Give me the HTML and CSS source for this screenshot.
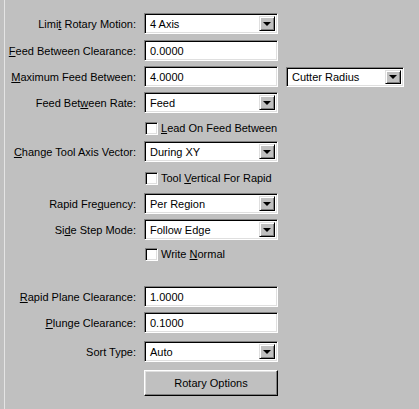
FILE: index.html
```html
<!DOCTYPE html>
<html>
<head>
<meta charset="utf-8">
<link rel="stylesheet" href="styles.css">
</head>
<body>
<div class="panel">
  <div class="row r1">
    <label class="lbl">Limi<u>t</u> Rotary Motion:</label>
    <div class="combo"><span class="val">4 Axis</span><span class="btn"><i class="tri"></i></span></div>
  </div>
  <div class="row r2">
    <label class="lbl"><u>F</u>eed Between Clearance:</label>
    <div class="edit"><span class="val">0.0000</span></div>
  </div>
  <div class="row r3">
    <label class="lbl"><u>M</u>aximum Feed Between:</label>
    <div class="edit"><span class="val">4.0000</span></div>
    <div class="combo small"><span class="val">Cutter Radius</span><span class="btn"><i class="tri"></i></span></div>
  </div>
  <div class="row r4">
    <label class="lbl">Feed Bet<u>w</u>een Rate:</label>
    <div class="combo"><span class="val">Feed</span><span class="btn"><i class="tri"></i></span></div>
  </div>
  <div class="check c1"><span class="box"></span><span class="ctext"><u>L</u>ead On Feed Between</span></div>
  <div class="row r6">
    <label class="lbl"><u>C</u>hange Tool Axis Vector:</label>
    <div class="combo"><span class="val">During XY</span><span class="btn"><i class="tri"></i></span></div>
  </div>
  <div class="check c2"><span class="box"></span><span class="ctext">Tool <u>V</u>ertical For Rapid</span></div>
  <div class="row r8">
    <label class="lbl">Rapid Fre<u>q</u>uency:</label>
    <div class="combo"><span class="val">Per Region</span><span class="btn"><i class="tri"></i></span></div>
  </div>
  <div class="row r9">
    <label class="lbl">Si<u>d</u>e Step Mode:</label>
    <div class="combo"><span class="val">Follow Edge</span><span class="btn"><i class="tri"></i></span></div>
  </div>
  <div class="check c3"><span class="box"></span><span class="ctext">Write <u>N</u>ormal</span></div>
  <div class="row r11">
    <label class="lbl"><u>R</u>apid Plane Clearance:</label>
    <div class="edit"><span class="val">1.0000</span></div>
  </div>
  <div class="row r12">
    <label class="lbl"><u>P</u>lunge Clearance:</label>
    <div class="edit"><span class="val">0.1000</span></div>
  </div>
  <div class="row r13">
    <label class="lbl">Sort Type:</label>
    <div class="combo"><span class="val">Auto</span><span class="btn"><i class="tri"></i></span></div>
  </div>
  <div class="brow">
    <div class="pbtn">Rotary Options</div>
  </div>
</div>
</body>
</html>
```
FILE: styles.css
```css
html, body {
  margin: 0;
  padding: 0;
  background: #c0c0c0;
  width: 419px;
  height: 409px;
  overflow: hidden;
}
body {
  font-family: "Liberation Sans", Arial, sans-serif;
  font-size: 11px;
  color: #000;
}
.panel {
  margin-left: 4px;
  border-left: 1px solid #e4e4e4;
  height: 409px;
  box-sizing: border-box;
  padding-top: 13px;
}
.row {
  display: flex;
  align-items: center;
  height: 21px;
}
.lbl {
  width: 131px;
  text-align: right;
  margin-right: 8px;
  white-space: nowrap;
}
u { text-decoration: underline; text-underline-offset: 1px; }
.edit, .combo {
  width: 134px;
  height: 21px;
  box-sizing: border-box;
  background: #fff;
  border: 1px solid;
  border-color: #808080 #fff #fff #808080;
  box-shadow: inset 1px 1px 0 #000, inset -1px -1px 0 #dfdfdf;
  display: flex;
  align-items: center;
  padding: 2px;
}
.val {
  flex: 1;
  padding-left: 3px;
  white-space: nowrap;
  overflow: hidden;
}
.combo.small {
  width: 118px;
  height: 20px;
  margin-left: 8px;
}
.btn {
  width: 16px;
  align-self: stretch;
  box-sizing: border-box;
  background: #c0c0c0;
  border: 1px solid;
  border-color: #dfdfdf #000 #000 #dfdfdf;
  box-shadow: inset 1px 1px 0 #fff, inset -1px -1px 0 #808080;
  display: flex;
  align-items: center;
  justify-content: center;
}
.tri {
  width: 0;
  height: 0;
  border-left: 4px solid transparent;
  border-right: 4px solid transparent;
  border-top: 4px solid #000;
  margin-top: 1px;
}
.r2 { margin-top: 6px; }
.r3 { margin-top: 5px; }
.r4 { margin-top: 5px; }
.check {
  display: flex;
  align-items: center;
  height: 14px;
  padding-left: 140px;
}
.box {
  width: 13px;
  height: 13px;
  box-sizing: border-box;
  background: #fff;
  border: 1px solid;
  border-color: #808080 #fff #fff #808080;
  box-shadow: inset 1px 1px 0 #000, inset -1px -1px 0 #dfdfdf;
  margin-right: 3px;
}
.c1 { margin-top: 8px; }
.r6 { margin-top: 6px; }
.c2 { margin-top: 9px; }
.r8 { margin-top: 8px; }
.r9 { margin-top: 5px; }
.c3 { margin-top: 7px; }
.r11 { margin-top: 25px; }
.r12 { margin-top: 5px; }
.r13 { margin-top: 8px; }
.brow {
  margin-top: 8px;
  padding-left: 139px;
}
.pbtn {
  width: 134px;
  height: 26px;
  box-sizing: border-box;
  background: #c0c0c0;
  border: 1px solid;
  border-color: #fff #000 #000 #fff;
  box-shadow: inset -1px -1px 0 #808080, inset 1px 1px 0 #dfdfdf;
  display: flex;
  align-items: center;
  justify-content: center;
}
```
